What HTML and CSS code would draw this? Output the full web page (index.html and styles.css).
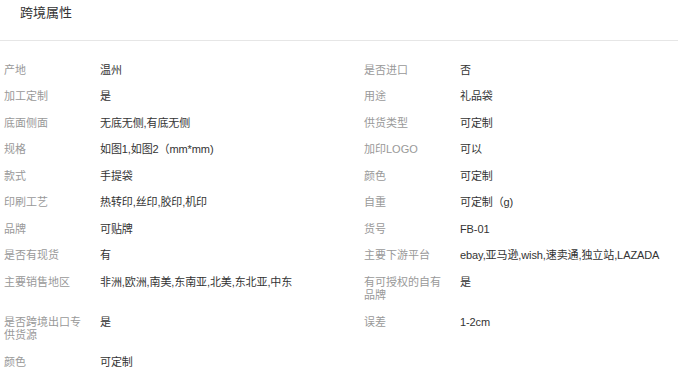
FILE: index.html
```html
<!DOCTYPE html>
<html lang="zh-CN">
<head>
<meta charset="utf-8">
<title>跨境属性</title>
<link rel="stylesheet" href="styles.css">
</head>
<body>
<div class="panel">
  <div class="panel-head">
    <h3 class="panel-title">跨境属性</h3>
  </div>
  <div class="attr-grid">
    <div class="attr"><div class="attr-label">产地</div><div class="attr-value">温州</div></div>
    <div class="attr"><div class="attr-label">是否进口</div><div class="attr-value">否</div></div>
    <div class="attr"><div class="attr-label">加工定制</div><div class="attr-value">是</div></div>
    <div class="attr"><div class="attr-label">用途</div><div class="attr-value">礼品袋</div></div>
    <div class="attr"><div class="attr-label">底面侧面</div><div class="attr-value">无底无侧,有底无侧</div></div>
    <div class="attr"><div class="attr-label">供货类型</div><div class="attr-value">可定制</div></div>
    <div class="attr"><div class="attr-label">规格</div><div class="attr-value">如图1,如图2（mm*mm)</div></div>
    <div class="attr"><div class="attr-label">加印LOGO</div><div class="attr-value">可以</div></div>
    <div class="attr"><div class="attr-label">款式</div><div class="attr-value">手提袋</div></div>
    <div class="attr"><div class="attr-label">颜色</div><div class="attr-value">可定制</div></div>
    <div class="attr"><div class="attr-label">印刷工艺</div><div class="attr-value">热转印,丝印,胶印,机印</div></div>
    <div class="attr"><div class="attr-label">自重</div><div class="attr-value">可定制（g)</div></div>
    <div class="attr"><div class="attr-label">品牌</div><div class="attr-value">可贴牌</div></div>
    <div class="attr"><div class="attr-label">货号</div><div class="attr-value">FB-01</div></div>
    <div class="attr"><div class="attr-label">是否有现货</div><div class="attr-value">有</div></div>
    <div class="attr"><div class="attr-label">主要下游平台</div><div class="attr-value">ebay,亚马逊,wish,速卖通,独立站,LAZADA</div></div>
    <div class="attr"><div class="attr-label">主要销售地区</div><div class="attr-value">非洲,欧洲,南美,东南亚,北美,东北亚,中东</div></div>
    <div class="attr"><div class="attr-label">有可授权的自有品牌</div><div class="attr-value">是</div></div>
    <div class="attr"><div class="attr-label">是否跨境出口专供货源</div><div class="attr-value">是</div></div>
    <div class="attr"><div class="attr-label">误差</div><div class="attr-value">1-2cm</div></div>
    <div class="attr"><div class="attr-label">颜色</div><div class="attr-value">可定制</div></div>
  </div>
</div>
</body>
</html>
```
FILE: styles.css
```css
* { box-sizing: border-box; }
html, body {
  margin: 0;
  padding: 0;
  background: #fff;
}
body {
  font-family: "Liberation Sans", "Noto Sans CJK SC", sans-serif;
  color: #333;
}
.panel-head {
  height: 41px;
  border-bottom: 1px solid #e6e6e6;
  padding: 4px 0 0 20px;
}
.panel-title {
  margin: 0;
  font-size: 13px;
  font-weight: normal;
  line-height: 18px;
  color: #333;
}
.attr-grid {
  display: grid;
  grid-template-columns: 360px 1fr;
  padding: 16px 0 0 4px;
}
.attr {
  display: flex;
  align-items: flex-start;
  padding: 6.5px 0;
  font-size: 11px;
  line-height: 13.5px;
}
.attr-label {
  width: 84px;
  margin-right: 12px;
  flex: none;
  color: #999;
}
.attr-value {
  color: #333;
  white-space: nowrap;
  letter-spacing: -0.1px;
}
```
